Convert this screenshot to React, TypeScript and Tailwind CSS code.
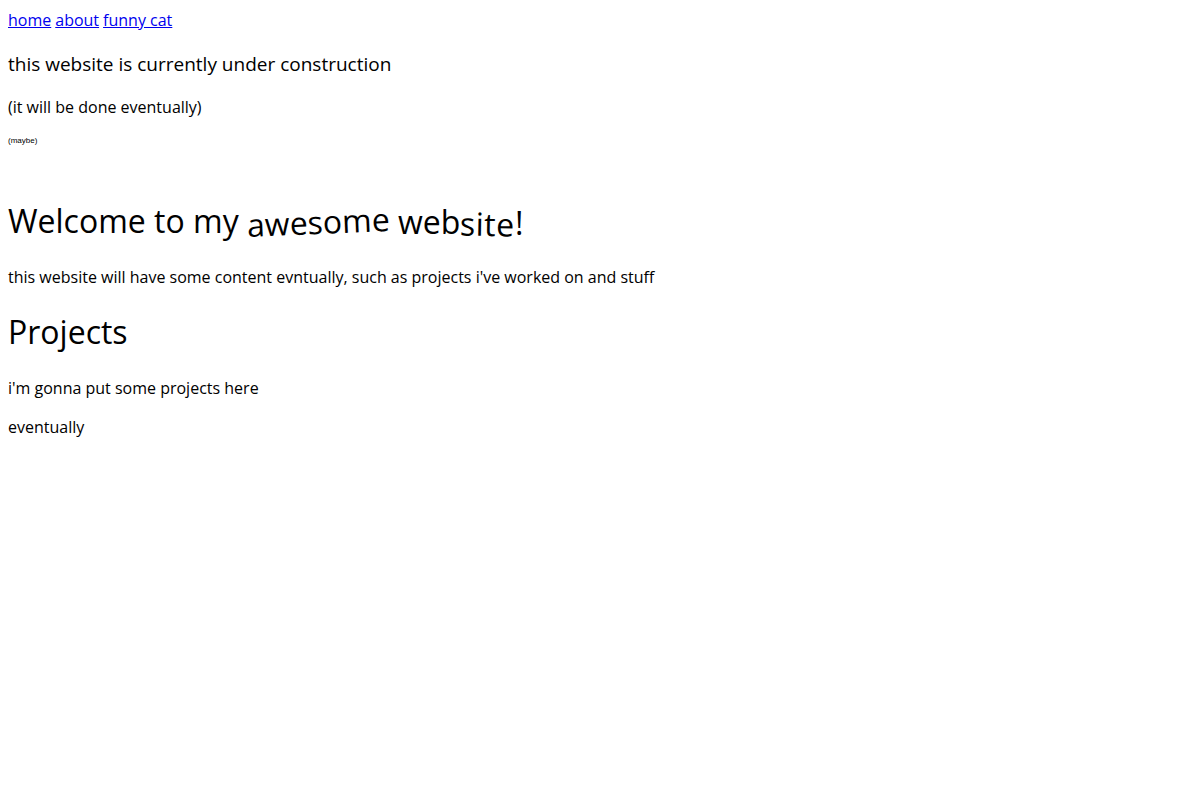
import React from "react";

export default function App() {
  return (
    <div className="min-h-[800px] bg-white px-2 pt-2 text-black font-['Open_Sans',sans-serif]">
      <nav className="flex gap-1 text-[16px] leading-[24px]">
        <a href="#" className="text-[#0000ee] underline">home</a>
        <a href="#" className="text-[#0000ee] underline">about</a>
        <a href="#" className="text-[#0000ee] underline">funny cat</a>
      </nav>
      <p className="mt-[18px] text-[19px] leading-[28px]">this website is currently under construction</p>
      <p className="mt-[17px] text-[16px] leading-[24px]">(it will be done eventually)</p>
      <p className="mt-[16px] text-[8px] leading-[12px] font-['Liberation_Sans',sans-serif]">(maybe)</p>
      <h1 className="mt-[52px] text-[32px] leading-[44px] flex items-baseline whitespace-pre">
        <span>Welcome to my </span>
        <span className="inline-block translate-y-[1px] rotate-[-2.5deg]">awesome</span>
        <span> </span>
        <span className="inline-block translate-y-[1px]">web</span>
        <span className="inline-block translate-y-[3px] rotate-[1deg] tracking-[0.5px]">site</span>
        <span className="inline-block translate-y-[2px]">!</span>
      </h1>
      <div>
        <p className="mt-[22px] text-[16px] leading-[24px]">
          this website will have some content evntually, such as projects i've worked on and stuff
        </p>
        <h2 className="mt-[21px] text-[32px] leading-[44px]">Projects</h2>
        <p className="mt-[22px] text-[16px] leading-[24px]">i'm gonna put some projects here</p>
        <p className="mt-[15px] text-[16px] leading-[24px]">eventually</p>
      </div>
    </div>
  );
}
